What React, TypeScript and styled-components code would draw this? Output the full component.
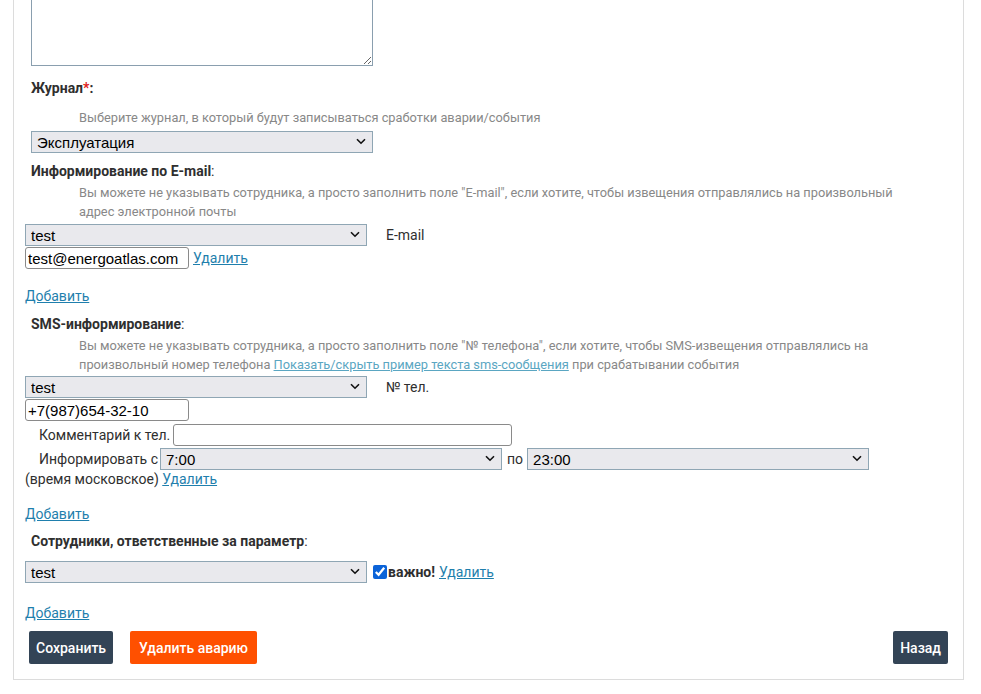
import React from "react";
import styled, { createGlobalStyle } from "styled-components";

const GlobalStyle = createGlobalStyle`
  html, body {
    margin: 0;
    padding: 0;
    background: #fff;
    overflow: hidden;
  }
  body {
    font-family: Roboto, "Noto Sans", sans-serif;
    font-size: 14px;
    color: #333;
  }
`;

const Panel = styled.div`
  margin: -50px 0 0 13px;
  border: 1px solid #dcdcdc;
  padding: 10px 11px 15px;
  box-sizing: border-box;
  width: 951px;
`;

const Note = styled.textarea`
  display: block;
  margin-left: 6px;
  width: 342px;
  height: 105px;
  box-sizing: border-box;
  border: 1px solid #8a9faf;
  resize: vertical;
  font-family: inherit;
`;

const Label = styled.div<{ $top?: number }>`
  padding-left: 6px;
  margin-top: ${(p) => p.$top ?? 0}px;
  font-weight: 700;
  line-height: 18px;
  color: #2f2f2f;
  span.colon {
    font-weight: 400;
  }
`;

const Star = styled.span`
  color: #e02020;
`;

const Hint = styled.div<{ $top?: number }>`
  padding-left: 54px;
  margin-top: ${(p) => p.$top ?? 0}px;
  font-size: 12.8px;
  line-height: 19px;
  color: #888;
  max-width: 840px;
`;

const HintLink = styled.a`
  color: #5aa6c2;
  text-decoration: underline;
`;

const Link = styled.a<{ $ml?: number }>`
  margin-left: ${(p) => p.$ml ?? 0}px;
  color: #1f7fad;
  text-decoration: underline;
  cursor: pointer;
`;

const Row = styled.div<{ $top?: number; $indent?: number }>`
  display: flex;
  align-items: center;
  margin-top: ${(p) => p.$top ?? 0}px;
  padding-left: ${(p) => p.$indent ?? 0}px;
  min-height: 22px;
`;

const SelectBox = styled.div<{ $w?: number }>`
  position: relative;
  width: ${(p) => p.$w ?? 342}px;
  flex: none;
`;

const Select = styled.select`
  appearance: none;
  display: block;
  width: 100%;
  height: 22px;
  box-sizing: border-box;
  border: 1px solid #8fa6b4;
  border-radius: 0;
  background: #e9e9ed;
  color: #000;
  font-family: "Liberation Sans", Arial, sans-serif;
  font-size: 15px;
  padding: 0 24px 0 5px;
  outline: none;
`;

const Chevron = styled.svg`
  position: absolute;
  right: 7px;
  top: 7px;
  pointer-events: none;
`;

const Input = styled.input<{ $w: number }>`
  width: ${(p) => p.$w}px;
  height: 22px;
  box-sizing: border-box;
  border: 1px solid #8a8a8a;
  border-radius: 3px;
  padding: 0 2px;
  font-family: "Liberation Sans", Arial, sans-serif;
  font-size: 15px;
  color: #000;
  flex: none;
`;

const Text = styled.span<{ $ml?: number; $mr?: number }>`
  margin-left: ${(p) => p.$ml ?? 0}px;
  margin-right: ${(p) => p.$mr ?? 0}px;
  color: #2f2f2f;
  line-height: 18px;
`;

const Strong = styled.b`
  color: #2f2f2f;
  margin-right: 4px;
`;

const Check = styled.input`
  margin: 0 1px 0 6px;
  width: 14px;
  height: 14px;
  accent-color: #0b63d8;
`;

const Block = styled.div<{ $top?: number }>`
  margin-top: ${(p) => p.$top ?? 0}px;
  line-height: 18px;
`;

const Buttons = styled.div`
  display: flex;
  align-items: center;
  gap: 17px;
  margin-top: 9px;
  padding: 0 4px;
`;

const Button = styled.button<{ $danger?: boolean }>`
  height: 33px;
  padding: 0 ${(p) => (p.$danger ? 9 : 7)}px;
  border: none;
  border-radius: 2px;
  background: ${(p) => (p.$danger ? "#ff5000" : "#334456")};
  color: #fff;
  font-family: inherit;
  font-size: 14px;
  font-weight: 500;
  cursor: pointer;
`;

const Spacer = styled.div`
  flex: 1;
`;

function Dropdown({ value, w }: { value: string; w?: number }) {
  return (
    <SelectBox $w={w}>
      <Select defaultValue={value}>
        <option>{value}</option>
      </Select>
      <Chevron width="10" height="7" viewBox="0 0 10 7">
        <path d="M1 1.2 L5 5.2 L9 1.2" fill="none" stroke="#111" strokeWidth="1.6" />
      </Chevron>
    </SelectBox>
  );
}

export default function App() {
  return (
    <>
      <GlobalStyle />
      <Panel>
        <Note />

        <Label $top={13}>
          Журнал<Star>*</Star>:
        </Label>
        <Hint $top={11}>Выберите журнал, в который будут записываться сработки аварии/события</Hint>
        <Row $top={4} $indent={6}>
          <Dropdown value="Эксплуатация" />
        </Row>

        <Label $top={9}>
          Информирование по E-mail<span className="colon">:</span>
        </Label>
        <Hint $top={3}>
          Вы можете не указывать сотрудника, а просто заполнить поле "E-mail", если хотите, чтобы
          извещения отправлялись на произвольный адрес электронной почты
        </Hint>
        <Row $top={3}>
          <Dropdown value="test" />
          <Text $ml={19}>E-mail</Text>
        </Row>
        <Row $top={1}>
          <Input $w={164} defaultValue="test@energoatlas.com" />
          <Link $ml={4}>Удалить</Link>
        </Row>
        <Block $top={18}>
          <Link>Добавить</Link>
        </Block>

        <Label $top={10}>
          SMS-информирование<span className="colon">:</span>
        </Label>
        <Hint $top={3}>
          Вы можете не указывать сотрудника, а просто заполнить поле "№ телефона", если хотите,
          чтобы SMS-извещения отправлялись на произвольный номер телефона{" "}
          <HintLink>Показать/скрыть пример текста sms-сообщения</HintLink> при срабатывании события
        </Hint>
        <Row $top={2}>
          <Dropdown value="test" />
          <Text $ml={19}>№ тел.</Text>
        </Row>
        <Row $top={1}>
          <Input $w={164} defaultValue="+7(987)654-32-10" />
        </Row>
        <Row $top={3} $indent={14}>
          <Text $mr={3}>Комментарий к тел.</Text>
          <Input $w={339} />
        </Row>
        <Row $top={2} $indent={14}>
          <Text $mr={2}>Информировать с</Text>
          <Dropdown value="7:00" />
          <Text $ml={5} $mr={4}>
            по
          </Text>
          <Dropdown value="23:00" />
        </Row>
        <Block>
          <Text>(время московское)</Text> <Link>Удалить</Link>
        </Block>
        <Block $top={17}>
          <Link>Добавить</Link>
        </Block>

        <Label $top={9}>
          Сотрудники, ответственные за параметр<span className="colon">:</span>
        </Label>
        <Row $top={11}>
          <Dropdown value="test" />
          <Check type="checkbox" defaultChecked />
          <Strong>важно!</Strong>
          <Link>Удалить</Link>
        </Row>
        <Block $top={21}>
          <Link>Добавить</Link>
        </Block>

        <Buttons>
          <Button>Сохранить</Button>
          <Button $danger>Удалить аварию</Button>
          <Spacer />
          <Button>Назад</Button>
        </Buttons>
      </Panel>
    </>
  );
}
